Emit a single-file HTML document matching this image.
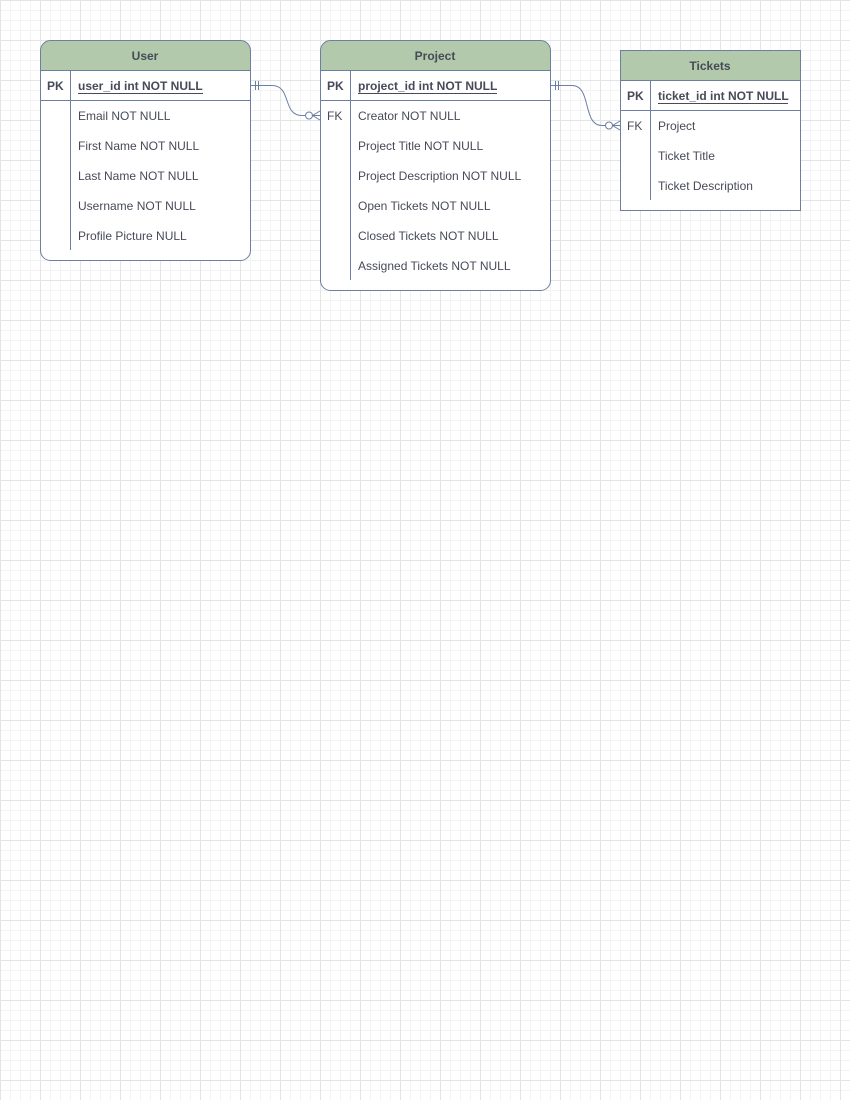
<!DOCTYPE html>
<html><head><style>
html,body{margin:0;padding:0;}
body{width:850px;height:1100px;background-color:#fff;
background-image:linear-gradient(to right,#e4e4e4 1px,transparent 1px),linear-gradient(to bottom,#e4e4e4 1px,transparent 1px),linear-gradient(to right,#f3f3f3 1px,transparent 1px),linear-gradient(to bottom,#f3f3f3 1px,transparent 1px);
background-size:40px 40px,40px 40px,10px 10px,10px 10px;overflow:hidden;}
svg{position:absolute;left:0;top:0;}
text{font-family:"Liberation Sans",sans-serif;font-size:12px;fill:#474a58;}
.b{font-weight:bold;}
</style></head><body>
<svg width="850" height="1100" xmlns="http://www.w3.org/2000/svg">
<g stroke="#6c7fa3" stroke-width="1" fill="none">
<path d="M40.5,70.5 V50.5 a10,10 0 0 1 10,-10 H240.5 a10,10 0 0 1 10,10 V70.5 Z" fill="#b2c9ab"/>
<path d="M40.5,70.5 V250.5 a10,10 0 0 0 10,10 H240.5 a10,10 0 0 0 10,-10 V70.5 Z" fill="#fff"/>
<line x1="40.5" y1="100.5" x2="250.5" y2="100.5"/>
<line x1="70.5" y1="70.5" x2="70.5" y2="250"/>
<path d="M320.5,70.5 V50.5 a10,10 0 0 1 10,-10 H540.5 a10,10 0 0 1 10,10 V70.5 Z" fill="#b2c9ab"/>
<path d="M320.5,70.5 V280.5 a10,10 0 0 0 10,10 H540.5 a10,10 0 0 0 10,-10 V70.5 Z" fill="#fff"/>
<line x1="320.5" y1="100.5" x2="550.5" y2="100.5"/>
<line x1="350.5" y1="70.5" x2="350.5" y2="280"/>
<rect x="620.5" y="50.5" width="180" height="30" fill="#b2c9ab"/>
<rect x="620.5" y="80.5" width="180" height="130" fill="#fff"/>
<line x1="620.5" y1="110.5" x2="800.5" y2="110.5"/>
<line x1="650.5" y1="80.5" x2="650.5" y2="200"/>
<path d="M250.5,85.5 H272 C292,85.5 282,115.5 302,115.5 H305"/>
<line x1="255.5" y1="81" x2="255.5" y2="90"/><line x1="258.5" y1="81" x2="258.5" y2="90"/>
<circle cx="309" cy="115.5" r="3.5" fill="#fff"/>
<path d="M320,111 L312.5,115.5 L320,120 M312.5,115.5 H320"/>
<path d="M550.5,85.5 H572 C592,85.5 582,125.5 602,125.5 H605"/>
<line x1="555.5" y1="81" x2="555.5" y2="90"/><line x1="558.5" y1="81" x2="558.5" y2="90"/>
<circle cx="609" cy="125.5" r="3.5" fill="#fff"/>
<path d="M620,121 L612.5,125.5 L620,130 M612.5,125.5 H620"/>
</g>
<text x="145" y="60" text-anchor="middle" class="b">User</text>
<text x="47" y="90" class="b">PK</text>
<text x="78" y="90" class="b">user_id int NOT NULL</text>
<line x1="78" y1="93.5" x2="203" y2="93.5" stroke="#474a58"/>
<text x="78" y="120">Email NOT NULL</text>
<text x="78" y="150">First Name NOT NULL</text>
<text x="78" y="180">Last Name NOT NULL</text>
<text x="78" y="210">Username NOT NULL</text>
<text x="78" y="240">Profile Picture NULL</text>

<text x="435" y="60" text-anchor="middle" class="b">Project</text>
<text x="327" y="90" class="b">PK</text>
<text x="358" y="90" class="b">project_id int NOT NULL</text>
<line x1="358" y1="93.5" x2="497" y2="93.5" stroke="#474a58"/>
<text x="327" y="120">FK</text>
<text x="358" y="120">Creator NOT NULL</text>
<text x="358" y="150">Project Title NOT NULL</text>
<text x="358" y="180">Project Description NOT NULL</text>
<text x="358" y="210">Open Tickets NOT NULL</text>
<text x="358" y="240">Closed Tickets NOT NULL</text>
<text x="358" y="270">Assigned Tickets NOT NULL</text>

<text x="710" y="70" text-anchor="middle" class="b">Tickets</text>
<text x="627" y="100" class="b">PK</text>
<text x="658" y="100" class="b">ticket_id int NOT NULL</text>
<line x1="658" y1="103.5" x2="788" y2="103.5" stroke="#474a58"/>
<text x="627" y="130">FK</text>
<text x="658" y="130">Project</text>
<text x="658" y="160">Ticket Title</text>
<text x="658" y="190">Ticket Description</text>
</svg>
</body></html>
